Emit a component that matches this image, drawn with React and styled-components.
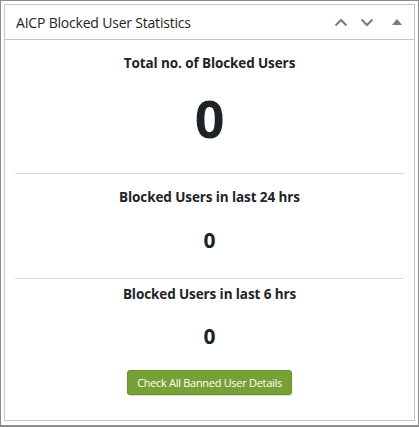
import styled, { createGlobalStyle } from 'styled-components'

const Global = createGlobalStyle`
  html, body {
    margin: 0;
    background: #f0f0f1;
  }
  body {
    font-family: "Open Sans", "Noto Sans", sans-serif;
    color: #1d2327;
  }
`

const Frame = styled.div`
  width: 419px;
  height: 427px;
  box-sizing: border-box;
  border: 1px solid #8c8c8c;
  border-bottom-width: 2px;
  padding: 3px 3px 4px 3px;
  background: #fff;
`

const Panel = styled.div`
  height: 100%;
  box-sizing: border-box;
  border: 1px solid #c3c4c7;
  display: flex;
  flex-direction: column;
`

const Header = styled.div`
  height: 35px;
  box-sizing: border-box;
  border-bottom: 1px solid #c3c4c7;
  display: flex;
  align-items: center;
  padding: 0 3px 0 11px;
`

const Title = styled.h2`
  flex: 1;
  margin: 0;
  font-size: 14px;
  font-weight: 400;
  letter-spacing: -0.2px;
`

const Actions = styled.div`
  display: flex;
  align-items: center;
  gap: 6px;
`

const IconBtn = styled.span`
  width: ${p => p.$w || 20}px;
  height: 20px;
  display: flex;
  align-items: center;
  justify-content: center;
  color: #787c82;
`

const Body = styled.div`
  padding: 0 10px;
  display: flex;
  flex-direction: column;
  align-items: center;
`

const Section = styled.div`
  width: 100%;
  text-align: center;
  padding: ${p => p.$pad};
  border-bottom: ${p => (p.$line ? '1px solid #dcdcde' : 'none')};
`

const Label = styled.div`
  font-size: 13.5px;
  font-weight: 700;
  line-height: 18px;
  letter-spacing: -0.1px;
`

const Count = styled.div`
  font-weight: 700;
  font-size: ${p => p.$size}px;
  line-height: ${p => p.$lh}px;
  margin-top: ${p => p.$top}px;
`

const Button = styled.button`
  margin-top: 21px;
  height: 25px;
  padding: 0 9px;
  background: #77a035;
  border: 1px solid #6a902f;
  border-radius: 3px;
  color: #fff;
  font-family: "Open Sans", "Noto Sans", sans-serif;
  font-size: 11px;
  letter-spacing: -0.3px;
  box-shadow: 0 1px 1px rgba(0, 0, 0, 0.15);
  cursor: pointer;
`

const Chevron = ({ up }) => (
  <svg width="14" height="9" viewBox="0 0 14 9">
    <path
      d={up ? 'M1.5 7.5 L7 2 L12.5 7.5' : 'M1.5 1.5 L7 7 L12.5 1.5'}
      fill="none"
      stroke="currentColor"
      strokeWidth="2"
    />
  </svg>
)

export default function App() {
  return (
    <>
      <Global />
      <Frame>
        <Panel>
          <Header>
            <Title>AICP Blocked User Statistics</Title>
            <Actions>
              <IconBtn><Chevron up /></IconBtn>
              <IconBtn><Chevron /></IconBtn>
              <IconBtn $w={28}>
                <svg width="10" height="6" viewBox="0 0 10 6">
                  <path d="M0 6 L5 0 L10 6 Z" fill="currentColor" />
                </svg>
              </IconBtn>
            </Actions>
          </Header>
          <Body>
            <Section $line $pad="14px 0 25px">
              <Label>Total no. of Blocked Users</Label>
              <Count $size={52} $lh={60} $top={16}>0</Count>
            </Section>
            <Section $line $pad="14px 0 25px">
              <Label>Blocked Users in last 24 hrs</Label>
              <Count $size={21} $lh={26} $top={21}>0</Count>
            </Section>
            <Section $pad="6px 0 0">
              <Label>Blocked Users in last 6 hrs</Label>
              <Count $size={21} $lh={26} $top={20}>0</Count>
            </Section>
            <Button>Check All Banned User Details</Button>
          </Body>
        </Panel>
      </Frame>
    </>
  )
}
